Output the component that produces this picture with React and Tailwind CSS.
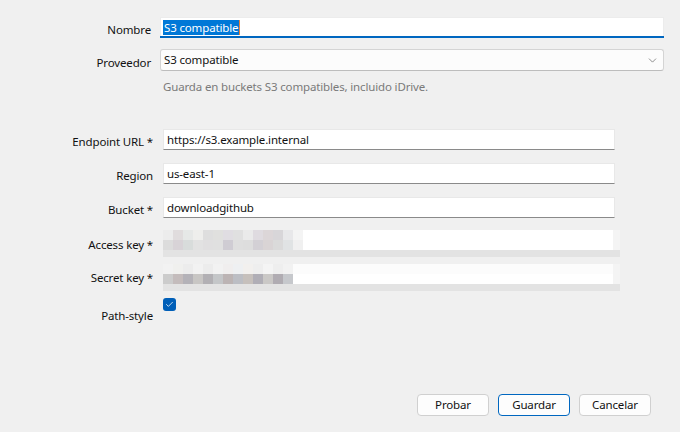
import { ChevronDown, Check } from "lucide-react";

const accessTop = ["#ececec", "#e0dcdd", "#e6e8e7", "#eeeeec", "#dedede", "#e0e0de", "#e0dde2", "#e0e0e0", "#eaeaea", "#dfdbe0", "#dcd6d8", "#d8d6d9", "#e8e8ea", "#f4f4f4"];
const accessBottom = ["#dcdcdc", "#d8d3d7", "#d8dcdb", "#e2e2e2", "#e0dfe0", "#e0e0e0", "#cfccd3", "#dedede", "#dddddd", "#d3d0d5", "#d9d4d5", "#dadada", "#e0e3e4", "#f0f0f0"];
const secretTop = ["#f2f2f2", "#f0f0ee", "#ececec", "#f2f2f2", "#ececec", "#f2f2f2", "#f0eeee", "#eef0f2", "#f2f0ee", "#eeeeee", "#f4f4f4", "#eeeeee", "#f2f2f2"];
const secretBottom = ["#cccccc", "#c4bcbc", "#b4b2b8", "#c8c6c4", "#b2b0b4", "#c4c6c8", "#bcb4b4", "#bcbec4", "#c6c0bc", "#b0aeb6", "#cac8c6", "#b0acb2", "#c6c8cc"];

function Label({ children, className = "" }) {
  return (
    <div className={"w-[153px] shrink-0 text-right leading-[16px] text-[#111] " + className}>
      {children}
    </div>
  );
}

function TextField({ value }) {
  return (
    <div className="ml-[10px] flex h-[21px] w-[452px] items-center border border-[#e8e8e8] border-b-[#8a8a8a] bg-white px-[3px] text-[#111]">
      {value}
    </div>
  );
}

// pixelated (blurred) secret value
function Pixelated({ top, bottom, tail }) {
  return (
    <div className="ml-[10px] flex w-[457px] flex-col">
      <div className="flex">
        <div className="flex flex-col">
          <div className="flex">
            {top.map((c, i) => (
              <div key={i} className="h-[10px] w-[10px]" style={{ background: c }} />
            ))}
          </div>
          <div className="flex">
            {bottom.map((c, i) => (
              <div key={i} className="h-[10px] w-[10px]" style={{ background: c }} />
            ))}
          </div>
        </div>
        <div className={"h-[20px] flex-1 " + tail} />
        <div className="h-[20px] w-[7px] bg-[#f4f4f4]" />
      </div>
      <div className="h-[7px] bg-[#e3e3e3]" />
    </div>
  );
}

function Btn({ children, primary }) {
  return (
    <button
      className={
        "h-[22px] w-[72px] rounded-[4px] border bg-[#fdfdfd] text-[#111] " +
        (primary ? "border-[#0067c0]" : "border-[#d0d0d0]")
      }
    >
      {children}
    </button>
  );
}

export default function App() {
  return (
    <div
      className="flex h-[432px] w-[680px] flex-col bg-[#f0f0f0] pt-[17px] text-[11.5px] tracking-[-0.15px]"
      style={{ fontFamily: '"Noto Sans", "Open Sans", sans-serif' }}
    >
      {/* Nombre */}
      <div className="flex items-start">
        <Label className="pt-[5px] pr-[2px]">Nombre</Label>
        <div className="ml-[7px] flex w-[504px] flex-col">
          <div className="flex h-[19px] items-center border border-b-0 border-[#ececec] bg-white pl-[2px]">
            <span className="bg-[#0078d7] px-[1px] leading-[15px] text-white">S3 compatible</span>
            <span className="h-[15px] w-[1px] bg-[#e8823a]" />
          </div>
          <div className="h-[2px] bg-[#0067c0]" />
        </div>
      </div>

      {/* Proveedor */}
      <div className="mt-[11px] flex items-start">
        <Label className="pt-[6px] pr-[2px]">Proveedor</Label>
        <div className="ml-[7px] flex h-[22px] w-[504px] items-center justify-between rounded-[3px] border border-[#d4d4d4] border-b-[#bdbdbd] bg-[#fcfcfc] pl-[3px] pr-[4px] text-[#111]">
          <span>S3 compatible</span>
          <ChevronDown size={13} strokeWidth={1.2} className="text-[#555]" />
        </div>
      </div>
      <div className="ml-[163px] mt-[8px] leading-[16px] text-[#7a7a7a]">
        Guarda en buckets S3 compatibles, incluido iDrive.
      </div>

      {/* S3 settings */}
      <div className="mt-[34px] flex flex-col gap-[13px]">
        <div className="flex items-start">
          <Label className="pt-[5px]">Endpoint URL *</Label>
          <TextField value="https://s3.example.internal" />
        </div>
        <div className="flex items-start">
          <Label className="pt-[5px]">Region</Label>
          <TextField value="us-east-1" />
        </div>
        <div className="flex items-start">
          <Label className="pt-[5px]">Bucket *</Label>
          <TextField value="downloadgithub" />
        </div>
      </div>

      <div className="mt-[12px] flex flex-col gap-[7px]">
        <div className="flex items-start">
          <Label className="pt-[7px]">Access key *</Label>
          <Pixelated top={accessTop} bottom={accessBottom} tail="bg-white" />
        </div>
        <div className="flex items-start">
          <Label className="pt-[6px]">Secret key *</Label>
          <Pixelated top={secretTop} bottom={secretBottom} tail="bg-[linear-gradient(#fcfcfc_50%,#ffffff_50%)]" />
        </div>
        <div className="flex items-start">
          <Label className="pt-[10px]">Path-style</Label>
          <div className="ml-[10px] flex h-[13px] w-[13px] items-center justify-center rounded-[3px] bg-[#005fb8]">
            <Check size={9} strokeWidth={2} className="text-white" />
          </div>
        </div>
      </div>

      <div className="mt-auto mb-[16px] mr-[29px] flex justify-end gap-[9px]">
        <Btn>Probar</Btn>
        <Btn primary>Guardar</Btn>
        <Btn>Cancelar</Btn>
      </div>
    </div>
  );
}
